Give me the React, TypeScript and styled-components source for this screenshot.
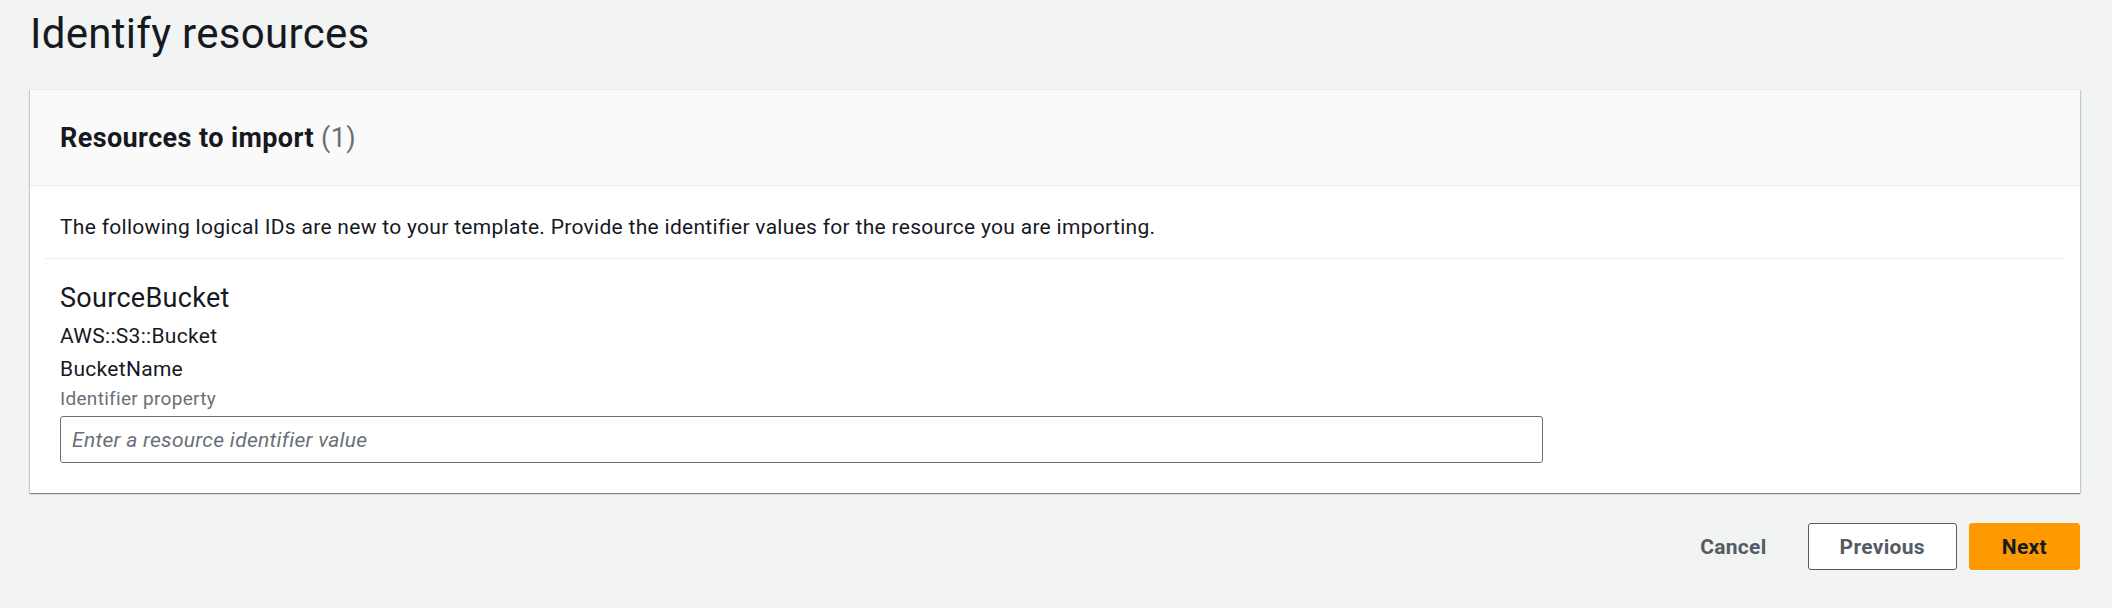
import React from "react";
import styled, { createGlobalStyle, css } from "styled-components";

const GlobalStyle = createGlobalStyle`
  html, body {
    margin: 0;
    padding: 0;
    background: #f2f3f3;
  }
  body {
    font-family: Roboto, "Liberation Sans", Arial, sans-serif;
    color: #16191f;
    letter-spacing: 0.3px;
    -webkit-font-smoothing: antialiased;
  }
  * { box-sizing: border-box; }
`;

const Page = styled.div`
  padding: 7px 32px 20px 30px;
`;

const Title = styled.h1`
  margin: 0 0 28px 0;
  font-size: 42px;
  line-height: 54px;
  font-weight: 400;
  color: #16191f;
`;

const Card = styled.section`
  background: #ffffff;
  border-top: 1px solid #eaeded;
  box-shadow: 0 1px 1px 0 rgba(0, 28, 36, 0.3),
    1px 1px 1px 0 rgba(0, 28, 36, 0.15),
    -1px 1px 1px 0 rgba(0, 28, 36, 0.15);
`;

const CardHeader = styled.header`
  display: flex;
  align-items: center;
  height: 96px;
  padding: 0 30px;
  background: #fafafa;
  border-bottom: 1px solid #eaeded;
`;

const HeaderTitle = styled.h2`
  margin: 0;
  font-size: 27px;
  line-height: 36px;
  font-weight: 700;
  letter-spacing: 0.4px;
  color: #16191f;
`;

const Counter = styled.span`
  font-weight: 400;
  color: #687078;
`;

const CardBody = styled.div`
  padding: 26px 15px 30px;
`;

const Description = styled.p`
  margin: 0;
  padding: 0 15px;
  font-size: 21px;
  line-height: 30px;
  color: #16191f;
`;

const Divider = styled.hr`
  margin: 16px 0 0;
  height: 1px;
  border: none;
  background: #eaeded;
`;

const Resource = styled.div`
  display: flex;
  flex-direction: column;
  padding: 21px 15px 0;
`;

const LogicalId = styled.h3`
  margin: 0;
  font-size: 27px;
  line-height: 36px;
  font-weight: 400;
  color: #16191f;
`;

const ResourceType = styled.div`
  margin-top: 5px;
  font-size: 21px;
  line-height: 30px;
  color: #16191f;
`;

const Field = styled.div`
  display: flex;
  flex-direction: column;
  margin-top: 3px;
`;

const FieldLabel = styled.label`
  font-size: 21px;
  line-height: 30px;
  color: #16191f;
`;

const FieldDescription = styled.div`
  margin-top: 1px;
  font-size: 19px;
  line-height: 27px;
  color: #687078;
`;

const Input = styled.input`
  margin-top: 4px;
  width: 1483px;
  height: 47px;
  padding: 0 11px;
  border: 1px solid #687078;
  border-radius: 3px;
  background: #ffffff;
  font-family: Roboto, "Liberation Sans", Arial, sans-serif;
  font-size: 21px;
  letter-spacing: 0.3px;
  color: #16191f;
  outline: none;

  &::placeholder {
    color: #687078;
    font-style: italic;
    opacity: 1;
  }
`;

const Actions = styled.div`
  display: flex;
  justify-content: flex-end;
  align-items: center;
  margin-top: 30px;
  gap: 12px;
`;

const Button = styled.button<{ $variant: "link" | "normal" | "primary" }>`
  height: 47px;
  padding: 0 32px;
  border-radius: 3px;
  font-family: Roboto, "Liberation Sans", Arial, sans-serif;
  font-size: 21px;
  font-weight: 700;
  letter-spacing: 0.3px;
  cursor: pointer;

  ${({ $variant }) =>
    $variant === "link" &&
    css`
      padding: 0 28px;
      background: transparent;
      border: 1px solid transparent;
      color: #545b64;
    `}
  ${({ $variant }) =>
    $variant === "normal" &&
    css`
      padding: 0 31px;
      background: #ffffff;
      border: 1px solid #545b64;
      color: #545b64;
    `}
  ${({ $variant }) =>
    $variant === "primary" &&
    css`
      background: #ff9900;
      border: 1px solid #ff9900;
      color: #16191f;
    `}
`;

export default function App() {
  return (
    <>
      <GlobalStyle />
      <Page>
        <Title>Identify resources</Title>
        <Card>
          <CardHeader>
            <HeaderTitle>
              Resources to import <Counter>(1)</Counter>
            </HeaderTitle>
          </CardHeader>
          <CardBody>
            <Description>
              The following logical IDs are new to your template. Provide the
              identifier values for the resource you are importing.
            </Description>
            <Divider />
            <Resource>
              <LogicalId>SourceBucket</LogicalId>
              <ResourceType>AWS::S3::Bucket</ResourceType>
              <Field>
                <FieldLabel htmlFor="bucket-name">BucketName</FieldLabel>
                <FieldDescription>Identifier property</FieldDescription>
                <Input
                  id="bucket-name"
                  placeholder="Enter a resource identifier value"
                />
              </Field>
            </Resource>
          </CardBody>
        </Card>
        <Actions>
          <Button $variant="link">Cancel</Button>
          <Button $variant="normal">Previous</Button>
          <Button $variant="primary">Next</Button>
        </Actions>
      </Page>
    </>
  );
}
